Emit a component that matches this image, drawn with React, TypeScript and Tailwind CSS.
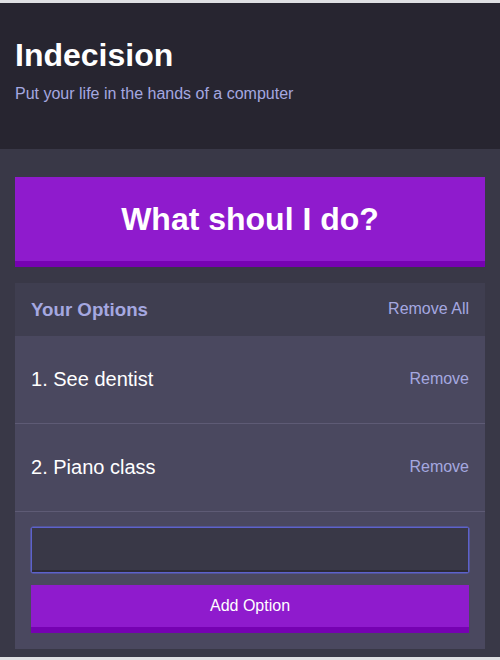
import React from "react";

const options = ["See dentist", "Piano class"];

export default function App() {
  return (
    <div
      className="w-[500px] h-[660px] bg-[#dfe0e3] pt-[3px] pb-[3px] flex flex-col"
      style={{ fontFamily: '"Liberation Sans", Arial, sans-serif' }}
    >
      <header className="bg-[#272530] pt-[32px] pb-[43px] px-[15px]">
        <h1 className="text-[32px] leading-[40px] font-bold text-white m-0">Indecision</h1>
        <p className="text-[16px] leading-[24px] text-[#a5a8e0] mt-[7px]">
          Put your life in the hands of a computer
        </p>
      </header>
      <main className="flex-1 bg-[#393847] px-[15px] pt-[28px] flex flex-col">
        <button className="w-full h-[90px] bg-[#8f1bcd] border-b-[6px] border-[#7602b2] text-white text-[32px] font-bold leading-[40px]">
          What shoul I do?
        </button>
        <section className="mt-[16px] bg-[#4a485f]">
          <div className="h-[53px] bg-[#3f3e50] flex items-center justify-between px-[16px]">
            <h3 className="text-[18.7px] font-bold text-[#a5a8e0] mt-[1px]">Your Options</h3>
            <button className="text-[16px] text-[#a5a8e0] -mt-[2px]">Remove All</button>
          </div>
          {options.map((o, i) => (
            <div
              key={o}
              className="h-[88px] border-b border-[#5e5b75] flex items-center justify-between px-[16px]"
            >
              <p className="text-[20px] text-white -mt-[1px]">
                {i + 1}. {o}
              </p>
              <button className="text-[16px] text-[#a5a8e0] -mt-[2px]">Remove</button>
            </div>
          ))}
          <form className="px-[16px] pt-[15px] pb-[16px] flex flex-col gap-[12px]">
            <div className="border border-[#5d62cc] rounded-[2px] shadow-[0_0_0_0.5px_#5d62cc]">
              <input
                type="text"
                className="block w-full h-[44px] bg-[#393847] border-b-2 border-[#2b2a36] outline-none text-white px-2"
              />
            </div>
            <button
              type="button"
              className="w-full h-[48px] bg-[#8f1bcd] border-b-[6px] border-[#7602b2] text-white text-[16px]"
            >
              Add Option
            </button>
          </form>
        </section>
      </main>
    </div>
  );
}
